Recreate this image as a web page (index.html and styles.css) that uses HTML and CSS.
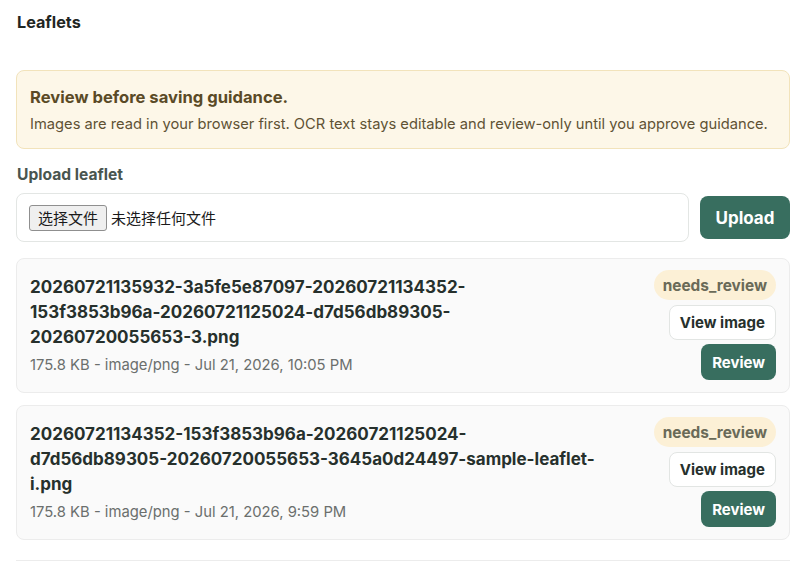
FILE: index.html
```html
<!DOCTYPE html>
<html lang="en">
<head>
<meta charset="utf-8">
<link rel="stylesheet" href="styles.css">
</head>
<body>
<main class="page">
  <h2 class="title">Leaflets</h2>
  <div class="alert">
    <div class="alert-title">Review before saving guidance.</div>
    <div class="alert-body">Images are read in your browser first. OCR text stays editable and review-only until you approve guidance.</div>
  </div>
  <div class="upload">
    <div class="upload-label">Upload leaflet</div>
    <div class="upload-row">
      <div class="file-box"><span class="file-btn">选择文件</span><span class="file-none">未选择任何文件</span></div>
      <button class="btn-primary btn-upload">Upload</button>
    </div>
  </div>
  <div class="list">
    <div class="card">
      <div class="card-info">
        <div class="card-name">20260721135932-3a5fe5e87097-20260721134352-<br>153f3853b96a-20260721125024-d7d56db89305-<br>20260720055653-3.png</div>
        <div class="card-meta">175.8 KB - image/png - Jul 21, 2026, 10:05 PM</div>
      </div>
      <div class="card-actions">
        <span class="badge">needs_review</span>
        <button class="btn-outline">View image</button>
        <button class="btn-primary btn-small">Review</button>
      </div>
    </div>
    <div class="card">
      <div class="card-info">
        <div class="card-name">20260721134352-153f3853b96a-20260721125024-<br>d7d56db89305-20260720055653-3645a0d24497-sample-leaflet-<br>i.png</div>
        <div class="card-meta">175.8 KB - image/png - Jul 21, 2026, 9:59 PM</div>
      </div>
      <div class="card-actions">
        <span class="badge">needs_review</span>
        <button class="btn-outline">View image</button>
        <button class="btn-primary btn-small">Review</button>
      </div>
    </div>
  </div>
  <div class="next"></div>
</main>
</body>
</html>
```
FILE: styles.css
```css
* { box-sizing: border-box; }
html, body { margin: 0; padding: 0; background: #fff; }
body {
  font-family: Inter, "Noto Sans", "Liberation Sans", "Noto Sans CJK SC", sans-serif;
  color: #26302c;
}
.page { padding: 12px 16px 0; }
.title {
  margin: 0;
  font-size: 16.2px;
  font-weight: 700;
  line-height: 20px;
  padding-left: 1px;
  color: #1f2623;
}
.alert {
  margin-top: 38px;
  background: #fdf7e8;
  border: 1px solid #f2e3bb;
  border-radius: 8px;
  padding: 14px 13px 14px;
}
.alert-title {
  font-size: 16.6px;
  font-weight: 700;
  line-height: 24px;
  color: #5a4a26;
}
.alert-body {
  margin-top: 5px;
  font-size: 14.7px;
  line-height: 20px;
  color: #5f5234;
}
.upload { margin-top: 16px; }
.upload-label {
  font-size: 15.6px;
  font-weight: 700;
  line-height: 20px;
  color: #49554f;
  padding-left: 1px;
}
.upload-row {
  margin-top: 8px;
  display: flex;
  align-items: center;
  gap: 11px;
}
.file-box {
  flex: 1;
  height: 49px;
  border: 1px solid #e3e6e4;
  border-radius: 8px;
  display: flex;
  align-items: center;
  padding-left: 12px;
  gap: 4px;
  font-family: "Noto Sans CJK SC", sans-serif;
  font-size: 15px;
  color: #1a1a1a;
}
.file-btn {
  display: inline-block;
  padding: 1px 8px;
  border: 1px solid #8f8f8f;
  border-radius: 3px;
  background: #efefef;
  line-height: 22px;
}
.btn-primary {
  border: none;
  background: #386e5f;
  color: #fff;
  font-family: inherit;
  font-weight: 700;
  border-radius: 8px;
}
.btn-upload {
  width: 90px;
  height: 43px;
  font-size: 17px;
}
.list {
  margin-top: 16px;
  display: flex;
  flex-direction: column;
  gap: 12px;
}
.card {
  display: flex;
  justify-content: space-between;
  align-items: flex-start;
  background: #fafafa;
  border: 1px solid #ececec;
  border-radius: 8px;
  padding: 11px 13px 12px 13px;
  min-height: 135px;
}
.card-info {
  padding-top: 5px;
}
.card-name {
  font-size: 17px;
  font-weight: 700;
  line-height: 25px;
  color: #26302c;
}
.card-meta {
  margin-top: 4px;
  font-size: 14.8px;
  line-height: 22px;
  color: #6b6f6d;
}
.card-actions {
  display: flex;
  flex-direction: column;
  align-items: flex-end;
  gap: 4px;
}
.badge {
  display: inline-flex;
  align-items: center;
  height: 30px;
  background: #fcf0d6;
  color: #6a6a58;
  font-size: 15.4px;
  font-weight: 700;
  padding: 0 9px;
  border-radius: 15px;
  margin-bottom: 1px;
}
.btn-outline {
  background: #fff;
  border: 1px solid #e2e5e3;
  color: #26302c;
  font-family: inherit;
  font-size: 15px;
  font-weight: 700;
  border-radius: 8px;
  height: 35px;
  padding: 0 10px;
}
.btn-small {
  font-size: 15px;
  height: 36px;
  padding: 0 11px;
}
.next {
  margin-top: 20px;
  border-top: 1px solid #ececec;
  height: 10px;
}
```
